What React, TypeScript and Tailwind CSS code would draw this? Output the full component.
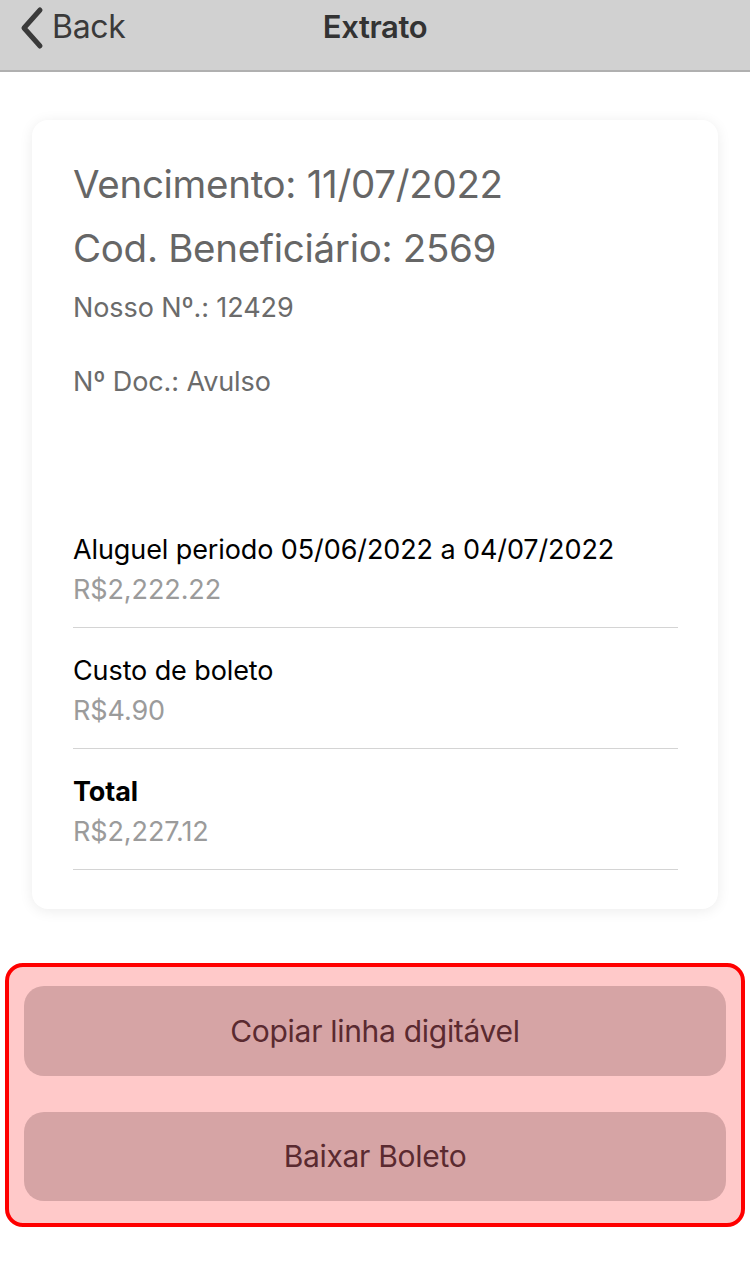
import React from "react";

const font = { fontFamily: "Inter, 'Noto Sans', sans-serif" };

function Item({ label, value, bold }: { label: string; value: string; bold?: boolean }) {
  return (
    <div className="border-b border-[#d4d4d4] pt-[23px] pb-[17px]">
      <div className={`text-[27px] leading-[40px] text-black tracking-[-0.1px] ${bold ? "font-bold" : ""}`}>{label}</div>
      <div className="text-[27px] leading-[40px] text-[#9b9b9b] tracking-[-0.1px]">{value}</div>
    </div>
  );
}

export default function App() {
  return (
    <div className="w-[750px] h-[1278px] bg-white" style={font}>
      <div className="h-[72px] bg-[#d1d1d1] border-b-2 border-[#b0b0b0] relative">
        <div className="h-[54px] flex items-center pl-[18px] text-[#3a3a3a]">
          <svg width="28" height="44" viewBox="0 0 28 44" className="mr-[6px] mt-[2px]">
            <path d="M22 4 L6 22 L22 40" fill="none" stroke="#3a3a3a" strokeWidth="5" strokeLinecap="round" strokeLinejoin="round" />
          </svg>
          <span className="text-[32px] tracking-[-0.3px]">Back</span>
        </div>
        <div className="absolute top-0 left-0 right-0 h-[54px] flex items-center justify-center text-[31px] font-semibold text-[#333] tracking-[-0.4px] pointer-events-none">Extrato</div>
      </div>

      <div className="px-[32px] pt-[48px]">
        <div className="bg-white rounded-[16px] shadow-[0_2px_14px_rgba(0,0,0,0.08)] pl-[41px] pr-[40px] pt-[32px] pb-[39px]">
          <div className="text-[38.5px] leading-[64px] text-[#666] tracking-[-0.3px]">Vencimento: 11/07/2022</div>
          <div className="text-[38.5px] leading-[64px] text-[#666] tracking-[-0.3px]">Cod. Beneficiário: 2569</div>
          <div className="text-[27px] leading-[40px] text-[#6b6b6b] mt-[8px] tracking-[-0.1px]">Nosso Nº.: 12429</div>
          <div className="text-[27px] leading-[40px] text-[#6b6b6b] mt-[34px] tracking-[-0.1px]">Nº Doc.: Avulso</div>
          <div className="h-[105px]" />
          <Item label="Aluguel periodo 05/06/2022 a 04/07/2022" value="R$2,222.22" />
          <Item label="Custo de boleto" value="R$4.90" />
          <Item label="Total" value="R$2,227.12" bold />
        </div>
      </div>

      <div className="mx-[5px] mt-[54px] border-4 border-[#ff0000] rounded-[18px] bg-[#ffc9c9] px-[15px] pt-[19px] pb-[22px] flex flex-col gap-[36px]">
        <button className="h-[90px] rounded-[20px] bg-[#d6a4a5] text-[#5a2a30] text-[30px] tracking-[-0.3px]">Copiar linha digitável</button>
        <button className="h-[89px] rounded-[20px] bg-[#d6a4a5] text-[#5a2a30] text-[30px] tracking-[-0.3px]">Baixar Boleto</button>
      </div>
    </div>
  );
}
